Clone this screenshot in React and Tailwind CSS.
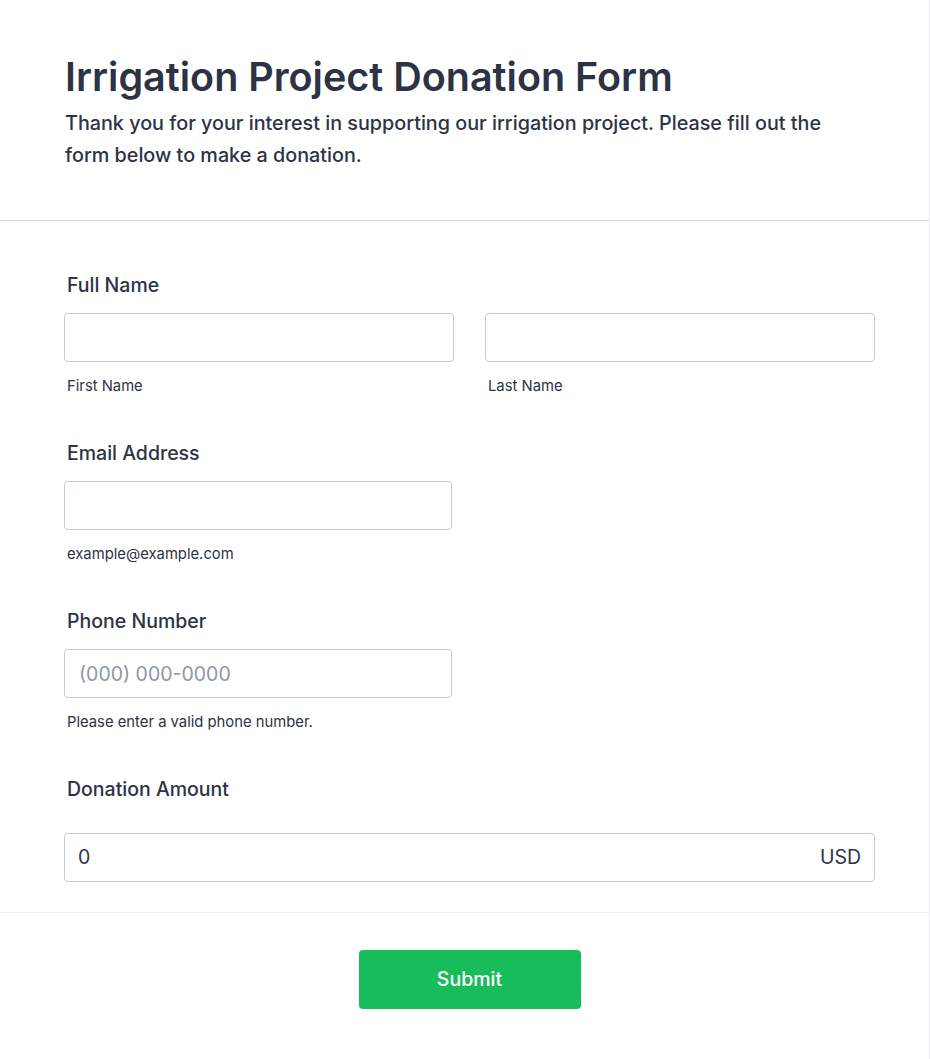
import React from 'react';

const labelCls = 'block pl-[3px] text-[19.5px] font-medium leading-[24px] text-[#2c3345]';
const hintCls = 'mt-[15px] pl-[3px] text-[14.8px] leading-[18px] text-[#2c3345]';

const Field = ({ label, children, hint, className = '' }) => (
  <div className={className}>
    <label className={labelCls}>{label}</label>
    {children}
    {hint && <p className={hintCls}>{hint}</p>}
  </div>
);

const inputCls =
  'block h-[49px] w-full rounded-[4px] border border-[#c3cad8] bg-white px-[14px] text-[19.5px] text-[#2c3345] placeholder:text-[#8f96a3] outline-none';

export default function App() {
  return (
    <div className="min-h-[1059px] bg-white font-['Inter','Noto_Sans',sans-serif] border-r border-[#ececf1]">
      {/* header */}
      <div className="pl-[65px] pr-[54px] pt-[54px] pb-[49px] border-b border-[#d8d8e3]">
        <h1 className="text-[39.5px] font-semibold leading-[46px] text-[#2c3345]">
          Irrigation Project Donation Form
        </h1>
        <p className="mt-[7px] max-w-[780px] text-[19.75px] font-medium leading-[32px] text-[#2c3345]">
          Thank you for your interest in supporting our irrigation project. Please fill out the form below to make a donation.
        </p>
      </div>

      <div className="pl-[64px] pr-[54px] pt-[52px] pb-[30px] border-b border-[#ececf1]">
        <Field label="Full Name">
          <div className="mt-[16px] flex gap-[31px]">
            <div className="w-[390px]">
              <input className={inputCls} />
              <p className={hintCls}>First Name</p>
            </div>
            <div className="w-[390px]">
              <input className={inputCls} />
              <p className={hintCls}>Last Name</p>
            </div>
          </div>
        </Field>

        <Field label="Email Address" hint="example@example.com" className="mt-[46px]">
          <div className="mt-[16px] w-[388px]">
            <input className={inputCls} />
          </div>
        </Field>

        <Field label="Phone Number" hint="Please enter a valid phone number." className="mt-[46px]">
          <div className="mt-[16px] w-[388px]">
            <input className={inputCls} placeholder="(000) 000-0000" />
          </div>
        </Field>

        <Field label="Donation Amount" className="mt-[46px]">
          <div className="mt-[32px] flex h-[49px] w-[811px] items-center justify-between rounded-[4px] border border-[#c3cad8] px-[13px] text-[19.5px] text-[#2c3345]">
            <span>0</span>
            <span>USD</span>
          </div>
        </Field>
      </div>

      <div className="flex justify-center pl-[64px] pr-[54px] pt-[37px] pb-[50px]">
        <button className="h-[59px] w-[222px] rounded-[4px] bg-[#18bd5b] text-[19.5px] font-medium text-white">
          Submit
        </button>
      </div>
    </div>
  );
}
